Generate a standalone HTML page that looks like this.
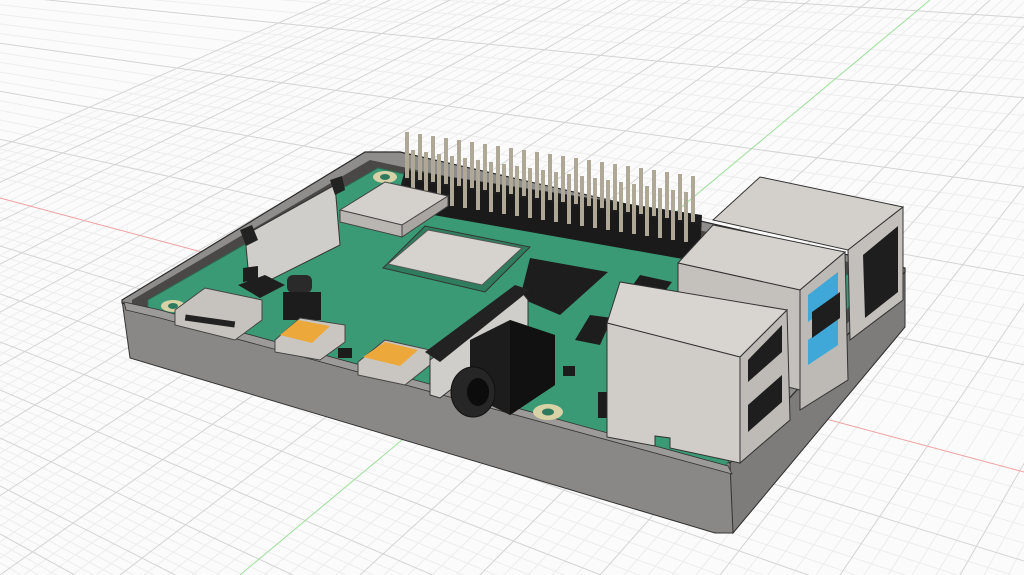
<!DOCTYPE html>
<html><head><style>html,body{margin:0;padding:0;background:#fafafa;overflow:hidden;width:1024px;height:575px}svg{display:block}</style></head>
<body>
<svg width="1024" height="575" viewBox="0 0 1024 575" xmlns="http://www.w3.org/2000/svg">
<rect width="1024" height="575" fill="#fbfbfb"/>
<g stroke="#ededed" stroke-width="1">
<line x1="0" y1="-43.2" x2="1024" y2="26.6"/><line x1="0" y1="-33.6" x2="1024" y2="44.4"/><line x1="0" y1="-24" x2="1024" y2="62.2"/><line x1="0" y1="-14.4" x2="1024" y2="80"/>
<line x1="0" y1="4.8" x2="1024" y2="115.6"/><line x1="0" y1="14.4" x2="1024" y2="133.4"/><line x1="0" y1="24" x2="1024" y2="151.2"/><line x1="0" y1="33.6" x2="1024" y2="169"/>
<line x1="0" y1="52.8" x2="1024" y2="204.6"/><line x1="0" y1="62.4" x2="1024" y2="222.4"/><line x1="0" y1="72" x2="1024" y2="240.2"/><line x1="0" y1="81.6" x2="1024" y2="258"/>
<line x1="0" y1="100.8" x2="1024" y2="293.6"/><line x1="0" y1="110.4" x2="1024" y2="311.4"/><line x1="0" y1="120" x2="1024" y2="329.2"/><line x1="0" y1="129.6" x2="1024" y2="347"/>
<line x1="0" y1="148.8" x2="1024" y2="382.6"/><line x1="0" y1="158.4" x2="1024" y2="400.4"/><line x1="0" y1="168" x2="1024" y2="418.2"/><line x1="0" y1="177.6" x2="1024" y2="436"/>
<line x1="0" y1="207.6" x2="1024" y2="489.8"/><line x1="0" y1="217.2" x2="1024" y2="507.6"/><line x1="0" y1="226.8" x2="1024" y2="525.4"/><line x1="0" y1="236.4" x2="1024" y2="543.2"/>
<line x1="0" y1="255.6" x2="1024" y2="578.8"/><line x1="0" y1="265.2" x2="1024" y2="596.6"/><line x1="0" y1="274.8" x2="1024" y2="614.4"/><line x1="0" y1="284.4" x2="1024" y2="632.2"/>
<line x1="0" y1="303.6" x2="1024" y2="667.8"/><line x1="0" y1="313.2" x2="1024" y2="685.6"/><line x1="0" y1="322.8" x2="1024" y2="703.4"/><line x1="0" y1="332.4" x2="1024" y2="721.2"/>
<line x1="0" y1="351.6" x2="1024" y2="756.8"/><line x1="0" y1="361.2" x2="1024" y2="774.6"/><line x1="0" y1="370.8" x2="1024" y2="792.4"/><line x1="0" y1="380.4" x2="1024" y2="810.2"/>
<line x1="0" y1="399.6" x2="1024" y2="845.8"/><line x1="0" y1="409.2" x2="1024" y2="863.6"/><line x1="0" y1="418.8" x2="1024" y2="881.4"/><line x1="0" y1="428.4" x2="1024" y2="899.2"/>
<line x1="0" y1="447.6" x2="1024" y2="934.8"/><line x1="0" y1="457.2" x2="1024" y2="952.6"/><line x1="0" y1="466.8" x2="1024" y2="970.4"/><line x1="0" y1="476.4" x2="1024" y2="988.2"/>
<line x1="0" y1="495.6" x2="1024" y2="1023.8"/><line x1="0" y1="505.2" x2="1024" y2="1041.6"/><line x1="0" y1="514.8" x2="1024" y2="1059.4"/><line x1="0" y1="524.4" x2="1024" y2="1077.2"/>
<line x1="0" y1="543.6" x2="1024" y2="1112.8"/><line x1="0" y1="553.2" x2="1024" y2="1130.6"/><line x1="0" y1="562.8" x2="1024" y2="1148.4"/>
</g>
<g stroke="#ededed" stroke-width="1">
<line x1="342" y1="0" x2="-936" y2="575"/><line x1="354" y1="0" x2="-912" y2="575"/><line x1="366" y1="0" x2="-888" y2="575"/><line x1="378" y1="0" x2="-864" y2="575"/>
<line x1="402" y1="0" x2="-816" y2="575"/><line x1="414" y1="0" x2="-792" y2="575"/><line x1="426" y1="0" x2="-768" y2="575"/><line x1="438" y1="0" x2="-744" y2="575"/>
<line x1="462" y1="0" x2="-696" y2="575"/><line x1="474" y1="0" x2="-672" y2="575"/><line x1="486" y1="0" x2="-648" y2="575"/><line x1="498" y1="0" x2="-624" y2="575"/>
<line x1="522" y1="0" x2="-576" y2="575"/><line x1="534" y1="0" x2="-552" y2="575"/><line x1="546" y1="0" x2="-528" y2="575"/><line x1="558" y1="0" x2="-504" y2="575"/>
<line x1="582" y1="0" x2="-456" y2="575"/><line x1="594" y1="0" x2="-432" y2="575"/><line x1="606" y1="0" x2="-408" y2="575"/><line x1="618" y1="0" x2="-384" y2="575"/>
<line x1="642" y1="0" x2="-336" y2="575"/><line x1="654" y1="0" x2="-312" y2="575"/><line x1="666" y1="0" x2="-288" y2="575"/><line x1="678" y1="0" x2="-264" y2="575"/>
<line x1="702" y1="0" x2="-216" y2="575"/><line x1="714" y1="0" x2="-192" y2="575"/><line x1="726" y1="0" x2="-168" y2="575"/><line x1="738" y1="0" x2="-144" y2="575"/>
<line x1="762" y1="0" x2="-96" y2="575"/><line x1="774" y1="0" x2="-72" y2="575"/><line x1="786" y1="0" x2="-48" y2="575"/><line x1="798" y1="0" x2="-24" y2="575"/>
<line x1="822" y1="0" x2="24" y2="575"/><line x1="834" y1="0" x2="48" y2="575"/><line x1="846" y1="0" x2="72" y2="575"/><line x1="858" y1="0" x2="96" y2="575"/>
<line x1="882" y1="0" x2="144" y2="575"/><line x1="894" y1="0" x2="168" y2="575"/><line x1="906" y1="0" x2="192" y2="575"/><line x1="918" y1="0" x2="216" y2="575"/>
<line x1="942" y1="0" x2="264" y2="575"/><line x1="954" y1="0" x2="288" y2="575"/><line x1="966" y1="0" x2="312" y2="575"/><line x1="978" y1="0" x2="336" y2="575"/>
<line x1="1002" y1="0" x2="384" y2="575"/><line x1="1014" y1="0" x2="408" y2="575"/><line x1="1026" y1="0" x2="432" y2="575"/><line x1="1038" y1="0" x2="456" y2="575"/>
<line x1="1062" y1="0" x2="504" y2="575"/><line x1="1074" y1="0" x2="528" y2="575"/><line x1="1086" y1="0" x2="552" y2="575"/><line x1="1098" y1="0" x2="576" y2="575"/>
<line x1="1122" y1="0" x2="624" y2="575"/><line x1="1134" y1="0" x2="648" y2="575"/><line x1="1146" y1="0" x2="672" y2="575"/><line x1="1158" y1="0" x2="696" y2="575"/>
<line x1="1182" y1="0" x2="744" y2="575"/><line x1="1194" y1="0" x2="768" y2="575"/><line x1="1206" y1="0" x2="792" y2="575"/><line x1="1218" y1="0" x2="816" y2="575"/>
<line x1="1242" y1="0" x2="864" y2="575"/><line x1="1254" y1="0" x2="888" y2="575"/><line x1="1266" y1="0" x2="912" y2="575"/><line x1="1278" y1="0" x2="936" y2="575"/>
<line x1="1302" y1="0" x2="984" y2="575"/><line x1="1314" y1="0" x2="1008" y2="575"/><line x1="1326" y1="0" x2="1032" y2="575"/><line x1="1338" y1="0" x2="1056" y2="575"/>
</g>
<g stroke="#d4d4d4" stroke-width="1">
<line x1="0" y1="-48" x2="1024" y2="17.7"/><line x1="0" y1="-4.8" x2="1024" y2="97.8"/><line x1="0" y1="43.2" x2="1024" y2="186.8"/><line x1="0" y1="91.2" x2="1024" y2="275.8"/><line x1="0" y1="139.2" x2="1024" y2="364.8"/><line x1="0" y1="246" x2="1024" y2="561"/><line x1="0" y1="294" x2="1024" y2="650"/><line x1="0" y1="342" x2="1024" y2="739"/><line x1="0" y1="390" x2="1024" y2="828"/><line x1="0" y1="438" x2="1024" y2="917"/><line x1="0" y1="486" x2="1024" y2="1006"/><line x1="0" y1="534" x2="1024" y2="1095"/>
<line x1="330" y1="0" x2="-960" y2="575"/><line x1="390" y1="0" x2="-840" y2="575"/><line x1="450" y1="0" x2="-720" y2="575"/><line x1="510" y1="0" x2="-600" y2="575"/><line x1="570" y1="0" x2="-480" y2="575"/><line x1="630" y1="0" x2="-360" y2="575"/><line x1="690" y1="0" x2="-240" y2="575"/><line x1="750" y1="0" x2="-120" y2="575"/><line x1="810" y1="0" x2="0" y2="575"/><line x1="870" y1="0" x2="120" y2="575"/><line x1="990" y1="0" x2="360" y2="575"/><line x1="1050" y1="0" x2="480" y2="575"/><line x1="1110" y1="0" x2="600" y2="575"/><line x1="1170" y1="0" x2="720" y2="575"/><line x1="1230" y1="0" x2="840" y2="575"/><line x1="1290" y1="0" x2="960" y2="575"/><line x1="1350" y1="0" x2="1080" y2="575"/>
</g>
<line x1="0" y1="198" x2="1024" y2="472" stroke="#f0a0a0" stroke-width="1"/>
<line x1="930" y1="0" x2="240" y2="575" stroke="#9ee09e" stroke-width="1"/>

<!-- case sides -->
<polygon points="122,300 130,358 715,533 733,533 905,327 905,270 730,463" fill="#8a8886" stroke="#333" stroke-width="1"/>
<polygon points="730,463 733,533 905,327 905,270" fill="#7e7c7a" stroke="#333" stroke-width="1"/>
<!-- case top rim -->
<polygon points="122,300 365,152 400,152 905,268 905,272 730,463 122,303" fill="#8f8d8b" stroke="#2a2a2a" stroke-width="1.2"/>
<polygon points="132,300 370,160 895,272 725,455 132,305" fill="#4a4846"/>
<!-- PCB -->
<polygon points="148,300 378,168 870,280 722,470 148,312" fill="#3b9a76" stroke="#2a6e54" stroke-width="1"/>
<!-- front rim -->
<polygon points="124,302 160,310 728,466 732,474 160,318 126,310" fill="#9d9b99" stroke="#333" stroke-width="0.8"/>
<!-- mounting holes -->
<ellipse cx="385" cy="177" rx="12" ry="6" fill="#d8d2a6"/><ellipse cx="385" cy="177" rx="5" ry="3" fill="#2f7a5e"/>
<ellipse cx="173" cy="306" rx="12" ry="6" fill="#d8d2a6"/><ellipse cx="173" cy="306" rx="5" ry="3" fill="#2f7a5e"/>
<ellipse cx="548" cy="412" rx="15" ry="8" fill="#d8d2a6"/><ellipse cx="548" cy="412" rx="6" ry="3.5" fill="#2f7a5e"/>

<!-- display connector -->
<polygon points="245,235 335,185 340,245 250,290" fill="#d0cecb" stroke="#333"/>
<polygon points="240,230 252,225 258,240 246,246" fill="#222"/>
<polygon points="330,180 342,176 345,190 335,195" fill="#222"/>
<!-- header -->
<polygon points="400,188 405,170 702,215 700,257 690,255" fill="#1e1e1e"/>
<g stroke="#b0a897" stroke-width="4">
<line x1="407" y1="132" x2="407" y2="178"/><line x1="420" y1="134" x2="420" y2="180"/><line x1="433" y1="136" x2="433" y2="182"/><line x1="446" y1="138" x2="446" y2="184"/><line x1="459" y1="140" x2="459" y2="186"/><line x1="472" y1="142" x2="472" y2="188"/><line x1="485" y1="144" x2="485" y2="190"/><line x1="498" y1="146" x2="498" y2="192"/><line x1="511" y1="148" x2="511" y2="194"/><line x1="524" y1="150" x2="524" y2="196"/><line x1="537" y1="152" x2="537" y2="198"/><line x1="550" y1="154" x2="550" y2="200"/><line x1="563" y1="156" x2="563" y2="202"/><line x1="576" y1="158" x2="576" y2="204"/><line x1="589" y1="160" x2="589" y2="206"/><line x1="602" y1="162" x2="602" y2="208"/><line x1="615" y1="164" x2="615" y2="210"/><line x1="628" y1="166" x2="628" y2="212"/><line x1="641" y1="168" x2="641" y2="214"/><line x1="654" y1="170" x2="654" y2="216"/><line x1="667" y1="172" x2="667" y2="218"/><line x1="680" y1="174" x2="680" y2="220"/><line x1="693" y1="176" x2="693" y2="222"/>
</g>
<polygon points="405,180 700,225 700,262 405,210" fill="#1a1a1a"/>
<g stroke="#b0a897" stroke-width="4">
<line x1="413" y1="150" x2="413" y2="200"/><line x1="426" y1="152" x2="426" y2="202"/><line x1="439" y1="154" x2="439" y2="204"/><line x1="452" y1="156" x2="452" y2="206"/><line x1="465" y1="158" x2="465" y2="208"/><line x1="478" y1="160" x2="478" y2="210"/><line x1="491" y1="162" x2="491" y2="212"/><line x1="504" y1="164" x2="504" y2="214"/><line x1="517" y1="166" x2="517" y2="216"/><line x1="530" y1="168" x2="530" y2="218"/><line x1="543" y1="170" x2="543" y2="220"/><line x1="556" y1="172" x2="556" y2="222"/><line x1="569" y1="174" x2="569" y2="224"/><line x1="582" y1="176" x2="582" y2="226"/><line x1="595" y1="178" x2="595" y2="228"/><line x1="608" y1="180" x2="608" y2="230"/><line x1="621" y1="182" x2="621" y2="232"/><line x1="634" y1="184" x2="634" y2="234"/><line x1="647" y1="186" x2="647" y2="236"/><line x1="660" y1="188" x2="660" y2="238"/><line x1="673" y1="190" x2="673" y2="240"/><line x1="686" y1="192" x2="686" y2="242"/>
</g>
<!-- wifi chip -->
<polygon points="340,210 385,182 448,196 402,225" fill="#d4d1cc" stroke="#444"/>
<polygon points="340,210 402,225 402,237 340,222" fill="#b9b6b1" stroke="#444"/>
<polygon points="402,225 448,196 448,206 402,237" fill="#a9a6a1" stroke="#444"/>
<!-- SoC -->
<polygon points="383,268 425,226 530,247 485,292" fill="#2f7d5e" stroke="#333"/>
<polygon points="388,264 428,230 522,248 482,285" fill="#d6d3ce" stroke="#555"/>
<!-- RAM -->
<polygon points="520,298 530,258 608,272 560,315" fill="#1d1d1d"/>
<polygon points="628,292 640,275 672,282 660,298" fill="#1d1d1d"/>
<polygon points="575,340 590,315 612,318 600,345" fill="#1d1d1d"/>
<!-- small comps -->
<polygon points="243,268 258,266 258,280 243,282" fill="#1e1e1e"/>
<polygon points="238,285 265,275 285,285 260,298" fill="#1e1e1e"/>
<rect x="287" y="275" width="25" height="18" rx="6" fill="#2a2a2a"/>
<rect x="283" y="292" width="38" height="28" fill="#1c1c1c"/>
<rect x="338" y="348" width="14" height="10" fill="#1c1c1c"/>
<rect x="563" y="366" width="12" height="10" fill="#1c1c1c"/>
<rect x="598" y="392" width="10" height="26" fill="#1c1c1c"/>
<!-- USB-C -->
<polygon points="175,310 205,288 262,300 262,320 235,340 175,325" fill="#c6c3be" stroke="#444"/>
<rect x="185" y="318" width="50" height="6" fill="#222" transform="rotate(8 210 321)"/>
<!-- micro HDMI -->
<polygon points="275,340 300,318 345,325 345,342 320,360 275,352" fill="#c9c6c1" stroke="#444"/>
<polygon points="280,335 298,320 330,326 312,343" fill="#eca83a"/>
<polygon points="358,362 385,340 430,350 430,365 405,385 358,375" fill="#c9c6c1" stroke="#444"/>
<polygon points="363,357 385,342 418,350 400,366" fill="#eca83a"/>
<!-- camera connector -->
<polygon points="430,360 520,290 528,300 528,330 440,398 430,395" fill="#d0cecb" stroke="#333"/>
<polygon points="425,352 515,285 530,290 440,362" fill="#222"/>
<!-- audio jack -->
<polygon points="470,340 510,320 555,335 555,385 510,415 470,395" fill="#1c1c1c"/>
<polygon points="510,320 555,335 555,385 510,415" fill="#111"/>
<ellipse cx="473" cy="392" rx="22" ry="25" fill="#262626" stroke="#111"/>
<ellipse cx="478" cy="392" rx="11" ry="14" fill="#0c0c0c"/>
<!-- ethernet -->
<polygon points="713,220 760,177 903,207 848,250" fill="#d3d0cb" stroke="#333"/>
<polygon points="848,250 903,207 903,300 850,340" fill="#c3c0bb" stroke="#333"/>
<polygon points="863,255 898,226 898,292 865,318" fill="#1e1e1e"/>
<!-- USB 3 stack -->
<polygon points="678,263 713,225 845,252 800,290" fill="#d5d2cd" stroke="#333"/>
<polygon points="678,263 800,290 800,390 678,360" fill="#c4c1bc" stroke="#333"/>
<polygon points="800,290 845,252 848,380 800,410" fill="#bdbab5" stroke="#333"/>
<polygon points="808,295 838,272 838,300 808,322" fill="#3fa8d8"/>
<polygon points="808,340 838,318 838,345 808,365" fill="#3fa8d8"/>
<polygon points="812,312 840,292 840,318 812,338" fill="#1e1e1e"/>
<!-- USB 2 stack front -->
<polygon points="607,323 620,282 787,310 740,357" fill="#d8d5d0" stroke="#333"/>
<polygon points="607,323 740,357 740,463 670,448 670,438 655,436 655,446 607,437" fill="#d0cdc8" stroke="#333"/>
<polygon points="740,357 787,310 790,420 740,463" fill="#bebbb6" stroke="#333"/>
<polygon points="748,360 782,325 782,352 748,382" fill="#1e1e1e"/>
<polygon points="748,405 782,375 782,402 748,432" fill="#1e1e1e"/>
</svg>
</body></html>
